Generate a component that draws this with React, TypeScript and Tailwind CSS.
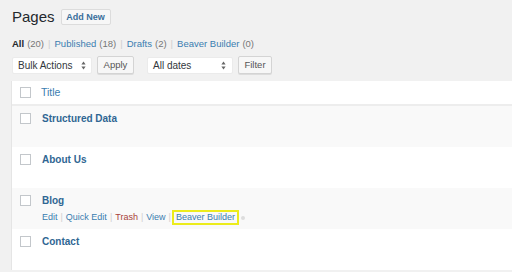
const font = { fontFamily: '"Liberation Sans", Arial, sans-serif' };

const rows = [
  { title: 'Structured Data', alt: true },
  { title: 'About Us', alt: false },
  { title: 'Blog', alt: true, actions: true },
  { title: 'Contact', alt: false },
];

const Checkbox = () => (
  <span className="block w-[11px] h-[11px] bg-white border border-[#c3c7cb] shrink-0" />
);

const SelectArrows = () => (
  <svg width="5" height="9" viewBox="0 0 5 9" className="shrink-0">
    <path d="M2.5 0.5 L4.6 3.6 H0.4 Z" fill="#666" />
    <path d="M2.5 8.5 L4.6 5.4 H0.4 Z" fill="#666" />
  </svg>
);

const Sep = ({ px = 'px-[4px]' }: { px?: string }) => (
  <span className={`text-[#cfcfcf] ${px}`}>|</span>
);

const App = () => {
  return (
    <div className="w-[512px] h-[272px] overflow-hidden bg-[#f1f1f1] text-[#23282d]" style={font}>
      <div className="pl-[12px] pt-[9px]">
        <div className="flex items-center h-[16px] gap-[6px]">
          <h1 className="text-[15px] leading-[16px] text-[#23282d]">Pages</h1>
          <button className="h-[16px] w-[50px] border border-[#dcdcdc] bg-[#f7f7f7] rounded-[2px] text-[9px] leading-[14px] font-bold text-[#3a6f9c]">
            Add New
          </button>
        </div>
        <div className="mt-[13px] h-[12px] flex items-center text-[9.5px] leading-[12px] text-[#777]">
          <span className="font-bold text-[#23282d]">All</span>
          <span className="ml-[3px]">(20)</span>
          <Sep />
          <span className="text-[#3a7db0]">Published</span>
          <span className="ml-[3px]">(18)</span>
          <Sep />
          <span className="text-[#3a7db0]">Drafts</span>
          <span className="ml-[3px]">(2)</span>
          <Sep />
          <span className="text-[#3a7db0]">Beaver Builder</span>
          <span className="ml-[3px]">(0)</span>
        </div>
        <div className="mt-[6px] flex items-center h-[18px] text-[10px] text-[#32373c]">
          <div className="w-[80px] h-[17px] bg-white border border-[#ebebeb] rounded-[2px] flex items-center justify-between pl-[5px] pr-[5px]">
            <span>Bulk Actions</span>
            <SelectArrows />
          </div>
          <button className="ml-[5px] w-[37px] h-[18px] bg-[#f7f7f7] border border-[#d4d4d4] rounded-[2px] text-[9.5px] text-[#555] shadow-[0_1px_0_#ddd]">
            Apply
          </button>
          <div className="ml-[13px] w-[86px] h-[17px] bg-white border border-[#ebebeb] rounded-[2px] flex items-center justify-between pl-[5px] pr-[6px]">
            <span>All dates</span>
            <SelectArrows />
          </div>
          <button className="ml-[5px] w-[34px] h-[18px] bg-[#f7f7f7] border border-[#d4d4d4] rounded-[2px] text-[9.5px] text-[#555] shadow-[0_1px_0_#ddd]">
            Filter
          </button>
        </div>
      </div>

      <div className="mt-[7px] ml-[11px] border-l border-[#e5e5e5] bg-white">
        <div className="h-[25px] flex items-center pl-[8px] border-b-2 border-[#ededed]">
          <Checkbox />
          <span className="ml-[10px] text-[10.5px] text-[#3a7db0]">Title</span>
        </div>
        {rows.map(({ title, alt, actions }) => (
          <div
            key={title}
            className={`h-[41px] flex pl-[8px] pt-[7px] ${alt ? 'bg-[#f9f9f9]' : 'bg-white'}`}
          >
            <Checkbox />
            <div className="ml-[11px]">
              <div className="text-[10px] leading-[12px] font-bold text-[#2f6693]">{title}</div>
              {actions && (
                <div className="mt-[3px] h-[15px] flex items-center text-[9px] leading-[11px] text-[#3a7db0]">
                  <span>Edit</span>
                  <Sep px="px-[3px]" />
                  <span>Quick Edit</span>
                  <Sep px="px-[3px]" />
                  <span className="text-[#a8413a]">Trash</span>
                  <Sep px="px-[3px]" />
                  <span>View</span>
                  <span className="text-[#cfcfcf] pl-[3px] pr-[1px]">|</span>
                  <span className="h-[15px] flex items-center border-2 border-[#ecec1c] px-[2px]">Beaver Builder</span>
                  <span className="ml-[2px] w-[4px] h-[4px] rounded-full bg-[#ddd]" />
                </div>
              )}
            </div>
          </div>
        ))}
      </div>
    </div>
  );
};

export default App;
